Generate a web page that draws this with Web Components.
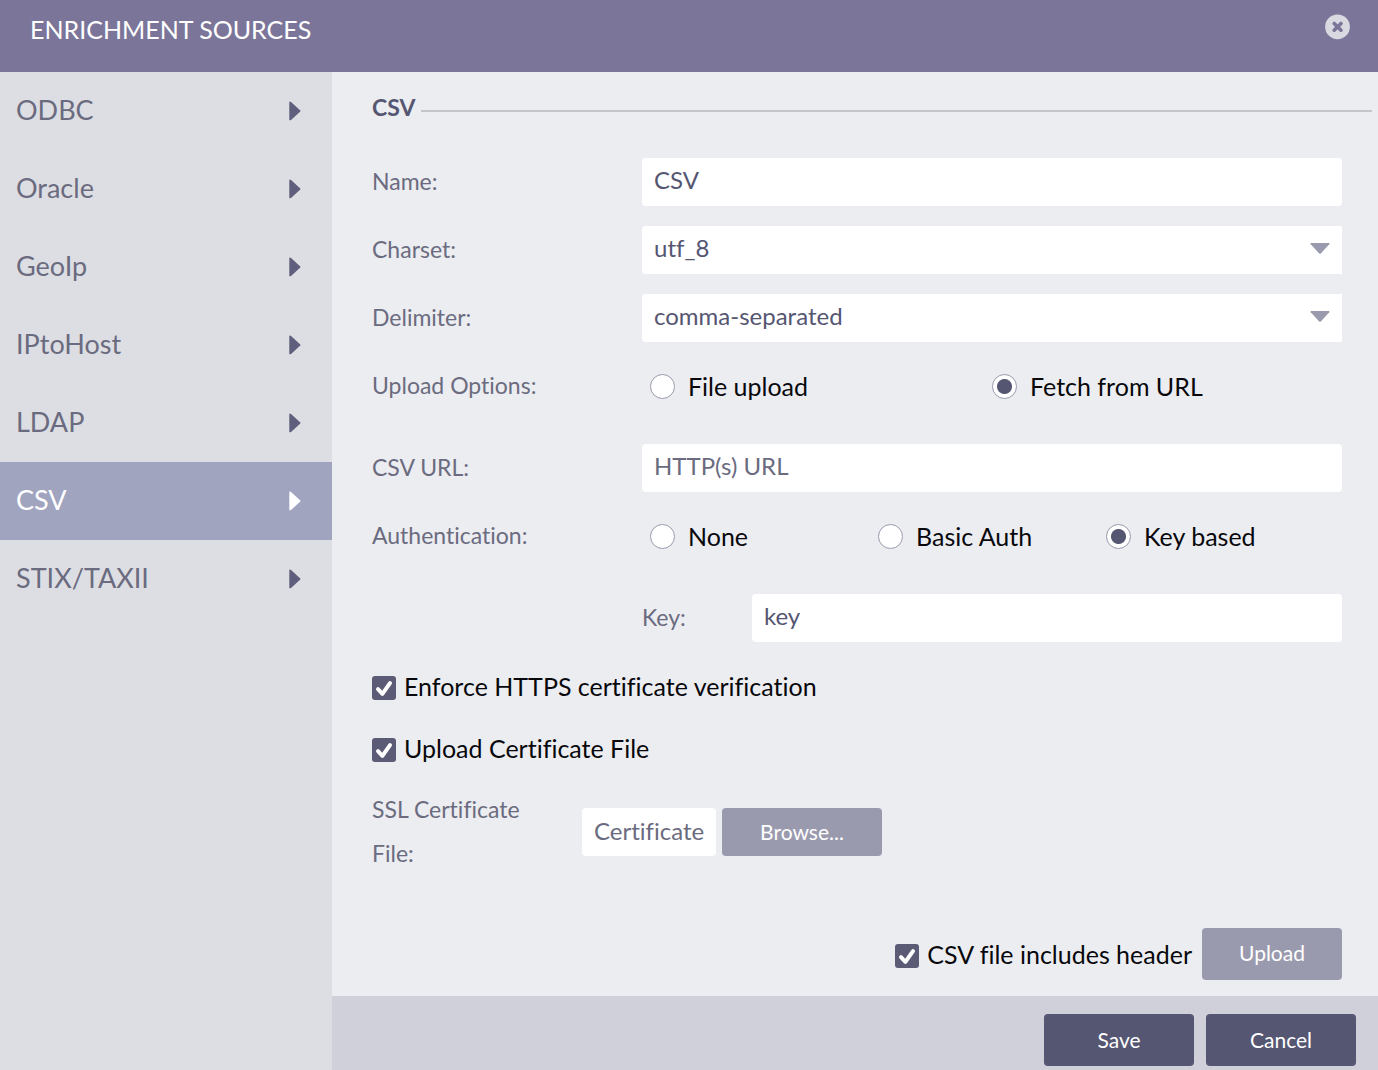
<!DOCTYPE html>
<html lang="en">
<head>
<meta charset="utf-8">
<meta name="viewport" content="width=device-width, initial-scale=1">
<title>Enrichment Sources</title>
<style>
  body {
    margin: 0;
    font-family: Lato, "Open Sans", sans-serif;
    font-variant-ligatures: none;
    --ink: #555672;
    --muted: #6b6b80;
    --soft: #9a9aae;
    --page: #ecedf1;
  }
</style>
</head>
<body>
<enrichment-dialog></enrichment-dialog>
<script>
const base = `<style>
  *, *::before { box-sizing: border-box; }
  :host { display: block; }
  input, select, button { font: inherit; font-variant-ligatures: none; margin: 0; border: 0; outline-offset: 2px; }
</style>`;

const define = (name, markup) => customElements.define(name, class extends HTMLElement {
  constructor() {
    super();
    this.attachShadow({ mode: "open" }).innerHTML = base + markup(this);
  }
});

const defineFromAttributes = (name, markup) => customElements.define(name, class extends HTMLElement {
  connectedCallback() {
    if (this.shadowRoot) return;
    this.attachShadow({ mode: "open" }).innerHTML = base + markup(this);
  }
});

/* Title bar with the close control */
define("dialog-header", () => `
<style>
  header { display: flex; justify-content: space-between; align-items: flex-start; height: 72px; padding: 14px 27px 0 30px; background: #7b7699; color: #fff; }
  h1 { margin: 0; font-size: 25px; line-height: 30px; font-weight: 400; }
  button { padding: 0; width: 26px; height: 26px; background: none; cursor: pointer; }
  svg { display: block; }
</style>
<header>
  <h1><slot></slot></h1>
  <button type="button" aria-label="Close">
    <svg width="26" height="26" viewBox="0 0 26 26"><circle cx="12.5" cy="12.8" r="12.4" fill="#d9d9e1"/><path d="M9.2 9.4l6.8 6.8M16 9.4l-6.8 6.8" stroke="#7b7699" stroke-width="3.6" stroke-linecap="round"/></svg>
  </button>
</header>`);

/* One entry of the source list */
define("source-item", () => `
<style>
  a { display: flex; align-items: center; justify-content: space-between; height: 78px; padding: 0 31px 0 16px; color: var(--muted); font-size: 27px; line-height: 32px; text-decoration: none; }
  span { padding-bottom: 2px; }
  svg { fill: #5f5e7c; }
  :host([active]) a { background: #a0a4bf; color: #fff; }
  :host([active]) svg { fill: #fff; }
</style>
<a href="#"><span><slot></slot></span>
<svg width="12" height="20" viewBox="0 0 12 20"><path d="M0.3 1.5Q0.3 0 1.6 0.8Q2 1 11.3 9.5Q11.8 10 11.3 10.5L2 18.9Q0.3 20 0.3 18.5Z"/></svg></a>`);

/* Section title followed by a rule */
define("section-title", () => `
<style>
  h2 { display: flex; align-items: center; gap: 6px; margin: 0; height: 72px; color: var(--ink); font-size: 23px; line-height: 28px; font-weight: 700; }
  span { padding-bottom: 2px; }
  h2::after { content: ""; flex: 1; height: 2px; margin-top: 6px; background: #c5c6cc; }
</style>
<h2><span><slot></slot></span></h2>`);

/* Label with a text box */
defineFromAttributes("text-field", el => `
<style>
  div { display: grid; grid-template-columns: var(--label, 270px) 1fr; align-items: center; }
  label { color: var(--muted); font-size: 23px; line-height: 28px; padding-bottom: 2px; }
  input { width: 100%; height: 48px; padding: 0 12px 6px; border-radius: 4px; background: #fff; color: var(--ink); font-size: 24px; }
  input::placeholder { color: var(--muted); opacity: 1; }
</style>
<div><label for="box">${el.getAttribute("label")}</label>
<input id="box" type="text" value="${el.getAttribute("value") || ""}" placeholder="${el.getAttribute("placeholder") || ""}"></div>`);

/* Label with a drop-down */
defineFromAttributes("select-field", el => `
<style>
  div { display: grid; grid-template-columns: 270px 1fr 44px; align-items: center; }
  label { color: var(--muted); font-size: 23px; line-height: 28px; padding-bottom: 2px; }
  select { grid-area: 1 / 2 / 2 / 4; width: 100%; height: 48px; padding: 0 56px 6px 12px; border-radius: 4px 0 0 4px; background: #fff; color: var(--ink); font-size: 24px; appearance: none; }
  svg { grid-area: 1 / 3; justify-self: center; margin-bottom: 3px; pointer-events: none; }
</style>
<div><label for="list">${el.getAttribute("label")}</label>
<select id="list">${el.getAttribute("options").split(",").map(o => `<option>${o}</option>`).join("")}</select>
<svg width="20" height="11" viewBox="0 0 20 11"><path d="M1 0H19Q20 .3 19.3 1.2L11 10.2Q10 11.2 9 10.2L.7 1.2Q0 .3 1 0Z" fill="#9a9aae"/></svg></div>`);

/* Label with a row of radio buttons */
defineFromAttributes("radio-field", el => `
<style>
  :host { margin-bottom: 14px; }
  .row { display: grid; grid-template-columns: 270px 1fr; align-items: center; height: 48px; }
  .caption { color: var(--muted); font-size: 23px; line-height: 28px; padding-bottom: 2px; }
  .choices { display: grid; grid-auto-flow: column; grid-auto-columns: 1fr; padding: 0 8px; }
  label { display: flex; align-items: center; gap: 13px; color: #08080c; font-size: 25px; line-height: 32px; }
  input { appearance: none; flex: none; width: 25px; height: 25px; border: 1px solid #9a9aae; border-radius: 50%; background: #fff; }
  input:checked { background: radial-gradient(circle, #555672 7px, #fff 8px); }
</style>
<div class="row" role="radiogroup" aria-labelledby="caption"><span class="caption" id="caption">${el.getAttribute("label")}</span>
<div class="choices">${el.getAttribute("options").split(",").map((o, i) =>
  `<label for="r${i}"><input type="radio" id="r${i}" name="choice" ${o === el.getAttribute("value") ? "checked" : ""}>${o}</label>`).join("")}</div></div>`);

/* Tick box with its text */
defineFromAttributes("check-field", el => `
<style>
  label { display: flex; align-items: center; gap: 8px; color: #08080c; font-size: 25px; line-height: 32px; }
  .tick { display: grid; margin-top: 4px; }
  input, svg { grid-area: 1 / 1; width: 24px; height: 24px; }
  input { appearance: none; border-radius: 3px; background: #fff; }
  input:checked { background: #5c5b76; }
  svg { pointer-events: none; fill: none; stroke: #fff; stroke-width: 4; stroke-linecap: round; stroke-linejoin: round; }
  input:not(:checked) + svg { display: none; }
</style>
<label for="tick"><span class="tick"><input id="tick" type="checkbox" checked><svg viewBox="0 0 24 24"><path d="M6 13.2L10.4 17.8L18 7.2"/></svg></span><span>${el.getAttribute("label")}</span></label>`);

/* Push button: solid by default, soft for secondary actions */
define("push-button", () => `
<style>
  button { width: 100%; height: 52px; border-radius: 4px; background: var(--ink); color: #fff; font-size: 21px; line-height: 28px; padding: 0; cursor: pointer; }
  :host { width: 150px; }
  :host([soft]) { width: 140px; }
  :host([soft]) button { background: var(--soft); padding-bottom: 2px; }
  :host([browse]) { width: 160px; }
  :host([browse]) button { height: 48px; padding: 0; }
</style>
<button type="button"><slot></slot></button>`);

/* Certificate file picker */
define("file-field", () => `
<style>
  div { display: flex; align-items: center; }
  label { width: 210px; padding-right: 40px; color: var(--muted); font-size: 23px; line-height: 44px; padding-bottom: 2px; }
  input { width: 134px; height: 48px; margin-right: 6px; padding: 0 12px 4px; border-radius: 4px; background: #fff; font-size: 24px; }
  input::placeholder { color: var(--muted); opacity: 1; }
</style>
<div><label for="file">SSL Certificate File:</label>
<input id="file" type="text" placeholder="Certificate">
<push-button soft browse>Browse...</push-button></div>`);

define("csv-form", () => `
<style>
  :host { flex: 1; }
  section-title { padding: 0 6px 0 40px; }
  form { display: flex; flex-direction: column; gap: 20px; padding: 14px 36px 16px 40px; }
  .key { padding-left: 270px; --label: 110px; }
  .checks { display: flex; flex-direction: column; gap: 30px; padding: 8px 0 3px; }
  .submit { display: flex; justify-content: flex-end; align-items: center; gap: 10px; padding-top: 31px; }
</style>
<section-title>CSV</section-title>
<form>
  <text-field label="Name:" value="CSV"></text-field>
  <select-field label="Charset:" options="utf_8,utf_16,ascii"></select-field>
  <select-field label="Delimiter:" options="comma-separated,tab-separated"></select-field>
  <radio-field label="Upload Options:" options="File upload,Fetch from URL" value="Fetch from URL"></radio-field>
  <text-field label="CSV URL:" placeholder="HTTP(s) URL"></text-field>
  <radio-field label="Authentication:" options="None,Basic Auth,Key based" value="Key based"></radio-field>
  <text-field class="key" label="Key:" value="key"></text-field>
  <div class="checks">
    <check-field label="Enforce HTTPS certificate verification"></check-field>
    <check-field label="Upload Certificate File"></check-field>
  </div>
  <file-field></file-field>
  <div class="submit">
    <check-field label="CSV file includes header"></check-field>
    <push-button soft>Upload</push-button>
  </div>
</form>`);

define("dialog-footer", () => `
<style>
  footer { display: flex; justify-content: flex-end; gap: 12px; padding: 18px 22px 4px; background: #d0d0da; }
</style>
<footer><slot></slot></footer>`);

define("enrichment-dialog", () => `
<style>
  :host { display: flex; flex-direction: column; min-height: 100vh; background: var(--page); }
  .body { flex: 1; display: flex; }
  nav { flex: 0 0 332px; background: #dddee3; }
  main { flex: 1; min-width: 0; display: flex; flex-direction: column; }
</style>
<dialog-header>ENRICHMENT SOURCES</dialog-header>
<div class="body">
  <nav aria-label="Sources">
    <source-item>ODBC</source-item>
    <source-item>Oracle</source-item>
    <source-item>GeoIp</source-item>
    <source-item>IPtoHost</source-item>
    <source-item>LDAP</source-item>
    <source-item active>CSV</source-item>
    <source-item>STIX/TAXII</source-item>
  </nav>
  <main>
    <csv-form></csv-form>
    <dialog-footer>
      <push-button>Save</push-button>
      <push-button>Cancel</push-button>
    </dialog-footer>
  </main>
</div>`);
</script>
</body>
</html>
